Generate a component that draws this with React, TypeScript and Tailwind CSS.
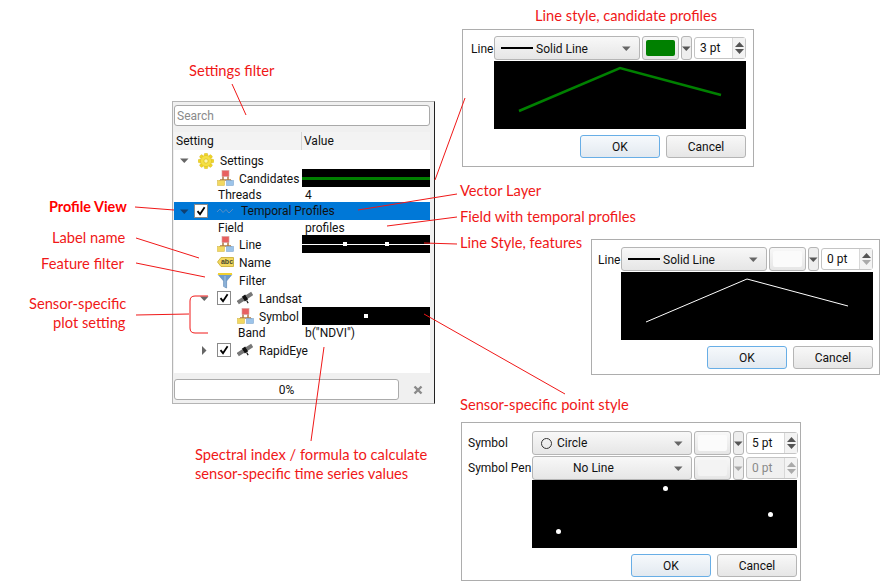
import React from "react";

const ui = "font-['Roboto','Open_Sans',sans-serif] text-[12px] leading-none text-[#111]";

function Caret({ dir = "down", color = "#666" }: { dir?: "down" | "right"; color?: string }) {
  return (
    <svg width="9" height="9" viewBox="0 0 9 9" className="shrink-0">
      {dir === "down" ? <path d="M0 2.5h8.5L4.3 7z" fill={color} /> : <path d="M2 0v9l4.5-4.5z" fill={color} />}
    </svg>
  );
}

function Check() {
  return (
    <div className="w-[14px] h-[14px] shrink-0 bg-white border border-[#8a8a8a] flex items-center justify-center">
      <svg width="10" height="10" viewBox="0 0 10 10">
        <path d="M1.5 5.2L4 8.2L8.6 1.2" fill="none" stroke="#000" strokeWidth="1.8" />
      </svg>
    </div>
  );
}

function Gear() {
  return (
    <svg width="16" height="16" viewBox="0 0 16 16" className="shrink-0">
      <g fill="#efd52a" stroke="#d4b414" strokeWidth="0.4">
        {[0, 45, 90, 135, 180, 225, 270, 315].map((a) => (
          <rect key={a} x="6.3" y="0.2" width="3.4" height="4" rx="1" transform={`rotate(${a} 8 8)`} />
        ))}
        <circle cx="8" cy="8" r="5.6" fill="#f5e044" />
      </g>
      <circle cx="8" cy="8" r="2.2" fill="#fdf6b0" stroke="#dcc020" strokeWidth="0.8" />
    </svg>
  );
}

function Sym() {
  return (
    <svg width="17" height="16" viewBox="0 0 17 16" className="shrink-0">
      <path d="M6 6v4M11 6v4M3 10h11M3 10v2M14 10v2" stroke="#b07a40" strokeWidth="1.5" fill="none" />
      <rect x="5" y="0.5" width="7" height="6" fill="#e86060" stroke="#d8a0a0" strokeWidth="0.6" />
      <rect x="0.5" y="10.5" width="7" height="5" fill="#f2d860" stroke="#d8bc50" strokeWidth="0.6" />
      <rect x="9.5" y="10.5" width="7" height="5" fill="#9cc4ea" stroke="#80a8d0" strokeWidth="0.6" />
    </svg>
  );
}

function Abc() {
  return (
    <svg width="17" height="10" viewBox="0 0 17 10" className="shrink-0">
      <path d="M4 .5h12.5v9H4L.5 5z" fill="#f2d860" stroke="#c8a828" strokeWidth="0.8" />
      <text x="10" y="7.4" textAnchor="middle" fontSize="7" fontWeight="700" fontFamily="Liberation Sans, sans-serif" fill="#4a4a30">abc</text>
    </svg>
  );
}

function Funnel() {
  return (
    <svg width="16" height="17" viewBox="0 0 16 17" className="shrink-0">
      <path d="M1 2.5h14L9.6 9v7l-3-1.5V9z" fill="#6f9ccb" stroke="#5d86b2" strokeWidth="0.6" />
      <rect x="1" y="1" width="14" height="2" fill="#f0d030" />
      <path d="M8 4v11" stroke="#a8c6e4" strokeWidth="1" />
    </svg>
  );
}

function Sat() {
  return (
    <svg width="16" height="14" viewBox="0 0 16 14" className="shrink-0">
      <g transform="rotate(-32 8 7)">
        <rect x="-0.5" y="5" width="6.5" height="4" fill="#777" />
        <rect x="10" y="5" width="6.5" height="4" fill="#777" />
        <rect x="6" y="4.2" width="4" height="5.6" fill="#111" />
        <path d="M8 10v3" stroke="#111" strokeWidth="1.2" />
      </g>
    </svg>
  );
}

function Spark() {
  return (
    <svg width="17" height="8" viewBox="0 0 17 8" className="shrink-0">
      <path d="M0 5L3 2L6 5.5L9 2.5L12 6L16 2" fill="none" stroke="#5a8ec4" strokeWidth="1" />
    </svg>
  );
}

function BlackLine({ color = "#fff", h = 1, dots = [] as number[] }) {
  return (
    <div className="relative h-[18px] w-[128px] bg-black flex items-center">
      <div className="w-full" style={{ height: h, background: color }} />
      {dots.map((d) => (
        <div key={d} className="absolute top-[7px] w-[4px] h-[4px] bg-white" style={{ left: d }} />
      ))}
    </div>
  );
}

function Row({
  h,
  pad,
  left,
  value,
  selected,
}: {
  h: number;
  pad: number;
  left: React.ReactNode;
  value?: React.ReactNode;
  selected?: boolean;
}) {
  return (
    <div className={`flex items-center ${selected ? "bg-[#0078d7]" : ""}`} style={{ height: h }}>
      <div className="w-[128px] shrink-0 flex items-center whitespace-nowrap" style={{ paddingLeft: pad }}>
        {left}
      </div>
      {value}
    </div>
  );
}

function MainPanel() {
  return (
    <div className={`absolute left-[172px] top-[101px] w-[263px] h-[303px] bg-[#f0f0f0] border border-[#b4b4b4] border-r-[#222] ${ui}`}>
      <div className="mx-[1px] mt-[3px] h-[21px] w-[256px] bg-white border border-[#a9a9a9] rounded-[3px] flex items-center px-[2px] text-[#8a8a8a]">
        Search
      </div>
      <div className="mx-[1px] mt-[6px] w-[256px] h-[18px] flex items-center bg-[#f3f3f3]">
        <div className="w-[128px] pl-[2px] border-r border-[#d4d4d4] h-full flex items-center">Setting</div>
        <div className="pl-[2px]">Value</div>
      </div>
      <div className="mx-[1px] w-[256px] h-[223px] bg-white pt-[2px]">
        <Row h={17} pad={6} left={<><Caret /><span className="ml-[9px]"><Gear /></span><span className="ml-[6px]">Settings</span></>} />
        <Row h={18} pad={43} left={<><Sym /><span className="ml-[5px] mt-[2px]">Candidates</span></>} value={<BlackLine color="#008000" h={3} />} />
        <Row h={15} pad={44} left={<span>Threads</span>} value={<span className="pl-[3px]">4</span>} />
        <Row selected h={18} pad={6} left={<><Caret color="#0f3f70" /><span className="ml-[5px]"><Check /></span><span className="ml-[9px]"><Spark /></span><span className="ml-[7px]">Temporal Profiles</span></>} />
        <Row h={15} pad={44} left={<span>Field</span>} value={<span className="pl-[3px]">profiles</span>} />
        <Row h={18} pad={43} left={<><Sym /><span className="ml-[5px] mt-[2px]">Line</span></>} value={<BlackLine dots={[41, 83]} />} />
        <Row h={18} pad={43} left={<><Abc /><span className="ml-[5px] mt-[2px]">Name</span></>} />
        <Row h={18} pad={43} left={<><Funnel /><span className="ml-[6px] mt-[2px]">Filter</span></>} />
        <Row h={18} pad={26} left={<><Caret /><span className="ml-[8px]"><Check /></span><span className="ml-[6px]"><Sat /></span><span className="ml-[6px] mt-[2px]">Landsat</span></>} />
        <Row h={18} pad={63} left={<><Sym /><span className="ml-[5px] mt-[2px]">Symbol</span></>} value={
          <div className="relative h-[18px] w-[128px] bg-black"><div className="absolute left-[62px] top-[7px] w-[4px] h-[4px] bg-white" /></div>
        } />
        <Row h={16} pad={64} left={<span>Band</span>} value={<span className="pl-[3px]">b("NDVI")</span>} />
        <Row h={18} pad={26} left={<><Caret dir="right" /><span className="ml-[8px]"><Check /></span><span className="ml-[6px]"><Sat /></span><span className="ml-[6px] mt-[2px]">RapidEye</span></>} />
      </div>
      <div className="mx-[1px] mt-[6px] flex items-center">
        <div className="w-[225px] h-[21px] bg-white border border-[#ababab] rounded-[3px] flex items-center justify-center">0%</div>
        <svg width="10" height="10" viewBox="0 0 10 10" className="ml-[14px]">
          <path d="M1.5 1.5l7 7M8.5 1.5l-7 7" stroke="#8a8a8a" strokeWidth="2.4" />
        </svg>
      </div>
    </div>
  );
}

function Combo({ w, line, label, circle, indent }: { w: number; line?: boolean; label: string; circle?: boolean; indent?: boolean }) {
  return (
    <div
      className="h-[24px] shrink-0 flex items-center pl-[5px] pr-[8px] border border-[#b5b5b5] rounded-[3px] bg-gradient-to-b from-[#f8f8f8] to-[#e6e6e6]"
      style={{ width: w }}
    >
      {line && <div className="w-[32px] h-[2px] bg-black mr-[3px] ml-[1px]" />}
      {circle && <div className="w-[11px] h-[11px] border border-[#333] rounded-full mx-[3px] mr-[5px]" />}
      <span className={indent ? "flex-1 pl-[35px]" : line ? "flex-1 pt-[2px]" : "flex-1"}>{label}</span>
      <Caret />
    </div>
  );
}

function Color({ fill, dim }: { fill: string; dim?: boolean }) {
  return (
    <>
      <div className="w-[37px] h-[24px] shrink-0 ml-[2px] p-[3px] border border-[#b5b5b5] rounded-[3px] bg-gradient-to-b from-[#f8f8f8] to-[#e6e6e6]">
        <div className="w-full h-full rounded-[2px]" style={{ background: fill }} />
      </div>
      <div className="w-[11px] h-[24px] shrink-0 ml-[2px] flex items-center justify-center border border-[#b5b5b5] rounded-[3px] bg-[#eeeeee]">
        <Caret color={dim ? "#aaa" : "#555"} />
      </div>
    </>
  );
}

function Spin({ label, w, dim }: { label: string; w: number; dim?: boolean }) {
  return (
    <div
      className={`h-[22px] shrink-0 ml-[2px] flex items-center justify-between pl-[5px] border border-[#c4c4c4] rounded-[3px] ${dim ? "bg-[#f0f0f0] text-[#8a8a8a]" : "bg-white"}`}
      style={{ width: w }}
    >
      <span>{label}</span>
      <div className="w-[13px] h-full flex flex-col items-center justify-center gap-[2px] bg-[#f3f3f3] border-l border-[#d8d8d8]">
        <svg width="9" height="5" viewBox="0 0 9 5"><path d="M0 5L4.5 0L9 5z" fill={dim ? "#aaa" : "#555"} /></svg>
        <svg width="9" height="5" viewBox="0 0 9 5"><path d="M0 0L4.5 5L9 0z" fill={label === "0 pt" ? "#aaa" : "#555"} /></svg>
      </div>
    </div>
  );
}

function Buttons() {
  return (
    <div className="flex justify-end gap-[6px] mt-[6px]">
      <div className="w-[80px] h-[23px] flex items-center justify-center border border-[#68aee6] rounded-[3px] bg-gradient-to-b from-[#f6f9fc] to-[#e2e9f0]">OK</div>
      <div className="w-[80px] h-[23px] flex items-center justify-center border border-[#b5b5b5] rounded-[3px] bg-gradient-to-b from-[#f8f8f8] to-[#e6e6e6]">Cancel</div>
    </div>
  );
}

function LineCanvas({ color, sw }: { color: string; sw: number }) {
  return (
    <svg width="252" height="68" viewBox="0 0 252 68" className="block bg-black">
      <polyline points="25,50 126,7 227,34" fill="none" stroke={color} strokeWidth={sw} />
    </svg>
  );
}

function LineDialog({ cls, color, sw, fill, pt }: { cls: string; color: string; sw: number; fill: string; pt: string }) {
  return (
    <div className={`absolute bg-white border border-[#adadad] ${cls} ${ui}`}>
      <div className="flex items-center">
        <span className="w-[23px] pt-[2px]">Line</span>
        <Combo w={146} line label="Solid Line" />
        <Color fill={fill} />
        <Spin label={pt} w={52} />
      </div>
      <div className="mt-[1px] flex justify-end">
        <LineCanvas color={color} sw={sw} />
      </div>
      <Buttons />
    </div>
  );
}

function SymbolDialog() {
  return (
    <div className={`absolute left-[461px] top-[422px] w-[340px] h-[159px] bg-white border border-[#adadad] ${ui} pt-[8px] pl-[6px] pr-[3px]`}>
      <div className="flex items-center">
        <span className="w-[64px] shrink-0 whitespace-nowrap">Symbol</span>
        <Combo w={160} circle label="Circle" />
        <Color fill="#fbfbfb" />
        <Spin label="5 pt" w={52} />
      </div>
      <div className="flex items-center mt-[1px]">
        <span className="w-[64px] shrink-0 whitespace-nowrap">Symbol Pen</span>
        <Combo w={160} indent label="No Line" />
        <Color fill="#f3f3f3" dim />
        <Spin label="0 pt" w={52} dim />
      </div>
      <div className="relative ml-[64px] w-[265px] h-[68px] bg-black">
        <div className="absolute left-[24px] top-[49px] w-[5px] h-[5px] rounded-full bg-white" />
        <div className="absolute left-[131px] top-[6px] w-[5px] h-[5px] rounded-full bg-white" />
        <div className="absolute left-[236px] top-[32px] w-[5px] h-[5px] rounded-full bg-white" />
      </div>
      <Buttons />
    </div>
  );
}

const labels: [string, number, number][] = [
  ["Settings filter", 189, 70],
  ["Line style, candidate profiles", 535, 15],
  ["Vector Layer", 460, 190],
  ["Field with temporal profiles", 460, 216],
  ["Line Style, features", 460, 242],
  ["Sensor-specific point style", 460, 404],
  ["Spectral index / formula to calculate", 195, 454],
  ["sensor-specific time series values", 195, 473],
  ["Label name", 52, 237],
  ["Feature filter", 41, 263],
  ["Sensor-specific", 29, 303],
  ["plot setting", 53, 322],
];

export default function App() {
  return (
    <div className="relative w-[880px] h-[581px] bg-white overflow-hidden">
      <MainPanel />
      <LineDialog cls="left-[462px] top-[29px] w-[292px] h-[138px] pt-[6px] pl-[8px] pr-[7px]" color="#008000" sw={2.5} fill="#008000" pt="3 pt" />
      <LineDialog cls="left-[591px] top-[239px] w-[289px] h-[136px] pt-[7px] pl-[6px] pr-[6px]" color="#ffffff" sw={1} fill="#fbfbfb" pt="0 pt" />
      <SymbolDialog />
      <svg width="880" height="581" viewBox="0 0 880 581" className="absolute left-0 top-0 pointer-events-none">
        <g fill="none" stroke="#f01818" strokeWidth="1">
          <path d="M232 84L246 115" />
          <path d="M135 207L174 210" />
          <path d="M136 238L199 258" />
          <path d="M136 263L205 277" />
          <path d="M136 315L189 314" />
          <path d="M208 296H195Q190 296 190 301V328Q190 333 195 333H208" />
          <path d="M435 180L465 98" />
          <path d="M358 210L457 194" />
          <path d="M387 226L457 217" />
          <path d="M424 243L457 244" />
          <path d="M424 314L565 394" />
          <path d="M324 347L311 441" />
        </g>
      </svg>
      {labels.map(([t, x, y]) => (
        <span
          key={t}
          className="absolute -translate-y-1/2 whitespace-nowrap font-['Lato',sans-serif] text-[14.7px] leading-none text-[#f01818]"
          style={{ left: x, top: y }}
        >
          {t}
        </span>
      ))}
      <span className="absolute left-[49px] top-[207px] -translate-y-1/2 whitespace-nowrap font-['Lato',sans-serif] font-bold text-[14.4px] leading-none text-[#f00]">
        Profile View
      </span>
    </div>
  );
}
